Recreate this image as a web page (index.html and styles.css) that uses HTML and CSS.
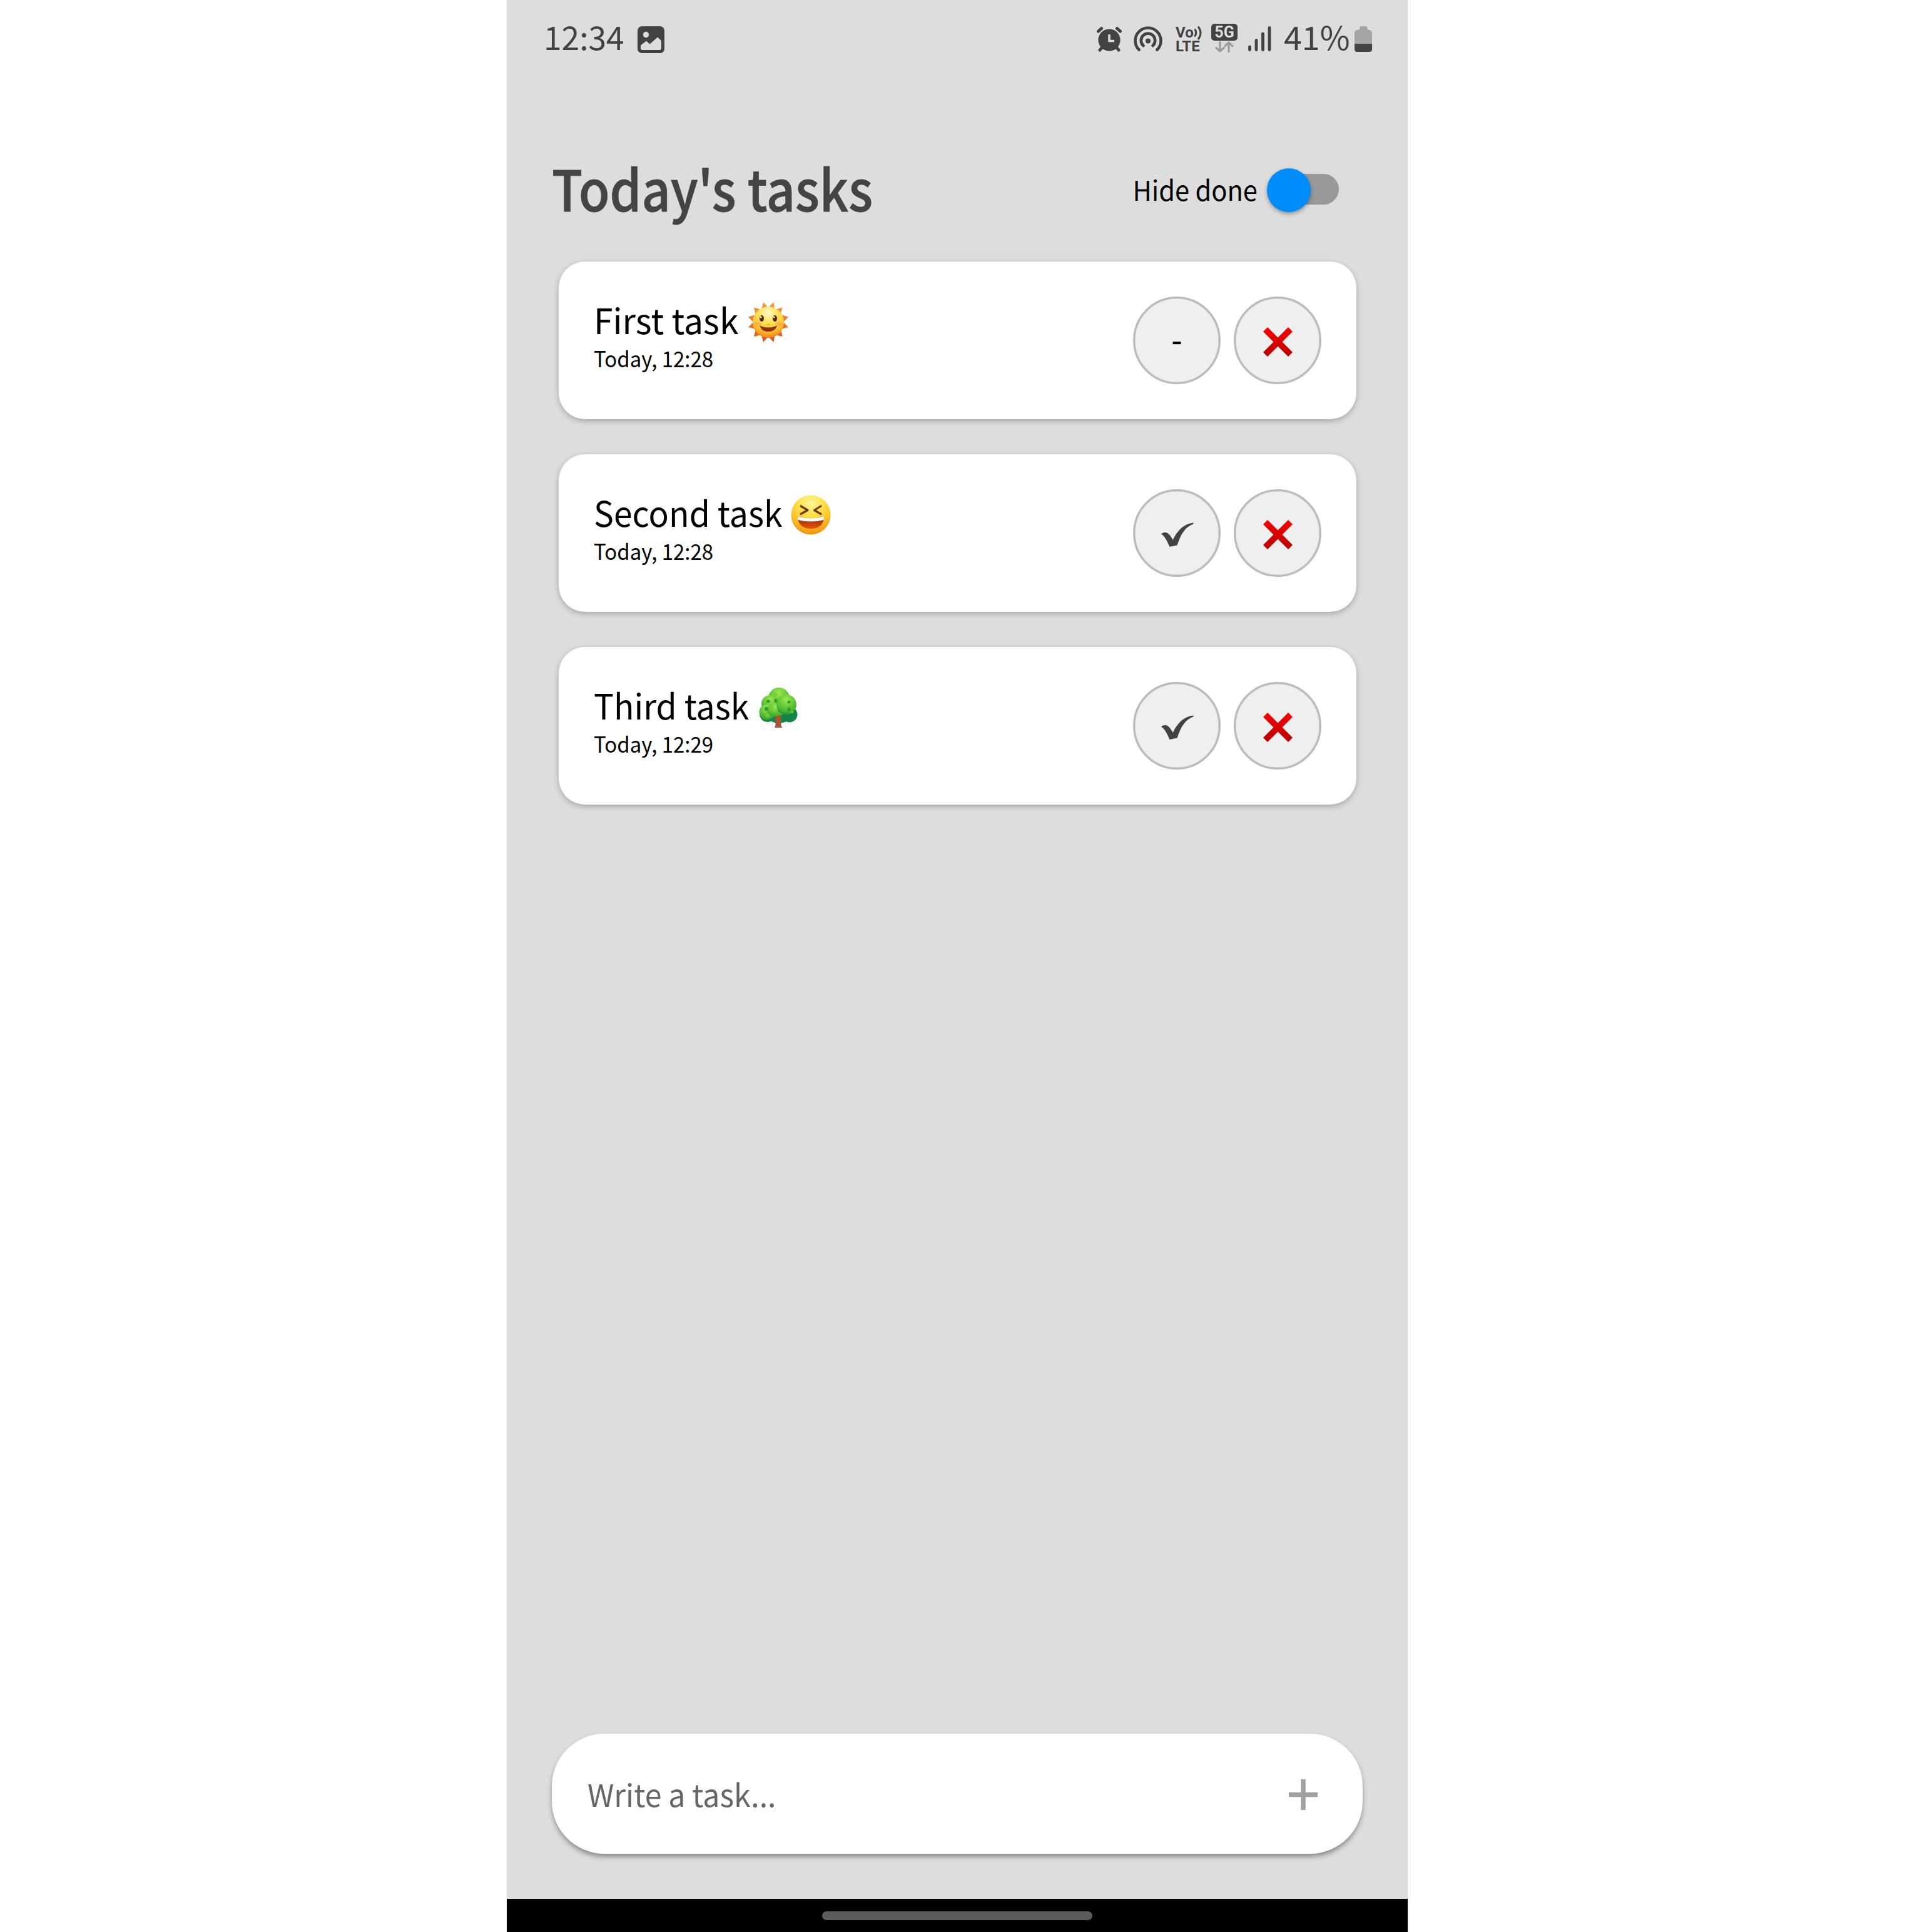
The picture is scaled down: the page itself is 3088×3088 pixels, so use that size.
FILE: index.html
```html
<!DOCTYPE html>
<html lang="en">
<head>
<meta charset="utf-8">
<title>Today's tasks</title>
<link rel="stylesheet" href="styles.css">
</head>
<body>
<svg class="defs" width="0" height="0" aria-hidden="true">
  <defs>
    <linearGradient id="red" x1="0" y1="0" x2="0" y2="1"><stop offset="0" stop-color="#f90000"/><stop offset="1" stop-color="#b80000"/></linearGradient>
    <radialGradient id="sunface" cx=".5" cy=".2" r=".85"><stop offset="0" stop-color="#fffbd0"/><stop offset=".3" stop-color="#ffe566"/><stop offset=".65" stop-color="#fdc832"/><stop offset="1" stop-color="#ee7418"/></radialGradient>
    <linearGradient id="ray" x1="0" y1="0" x2="0" y2="1"><stop offset="0" stop-color="#f59a3c"/><stop offset="1" stop-color="#d9531e"/></linearGradient>
    <radialGradient id="laugh" cx=".5" cy=".2" r=".85"><stop offset="0" stop-color="#fff69a"/><stop offset=".35" stop-color="#ffe34a"/><stop offset=".65" stop-color="#fdc42a"/><stop offset="1" stop-color="#f08206"/></radialGradient>
    <linearGradient id="mouth" x1="0" y1="0" x2="0" y2="1"><stop offset="0" stop-color="#8f2a08"/><stop offset="1" stop-color="#e85208"/></linearGradient>
    <radialGradient id="leaf" cx=".5" cy=".25" r=".8"><stop offset="0" stop-color="#9be84e"/><stop offset=".55" stop-color="#5cc436"/><stop offset="1" stop-color="#2f9f2f"/></radialGradient>
    <linearGradient id="trunk" x1="0" y1="0" x2="0" y2="1"><stop offset="0" stop-color="#a5571d"/><stop offset="1" stop-color="#a35349"/></linearGradient>
    <symbol id="cross" viewBox="0 0 47 47"><path d="M7 0 23.500 16.500 40 0 47 7 30.500 23.500 47 40 40 47 23.500 30.500 7 47 0 40 16.500 23.500 0 7Z" fill="url(#red)"/></symbol>
    <symbol id="check" viewBox="0 0 52 40"><path d="M0 18.500C3 16 6 15.500 9 16.500C14 19 17 25 18.700 28C26 12 37 2 51.500 .5V2.500C39 7 32 17 25.500 36.500L13.500 39C9.500 30 6 22 0 18.500Z" fill="#424242"/></symbol>
  </defs>
</svg>
<main class="phone">
  <header class="status">
    <span class="clock">12:34</span>
    <svg class="picture" viewBox="0 0 43 43"><rect width="43" height="43" rx="7" fill="#424242"/><circle cx="13.500" cy="13.500" r="4.700" fill="#ddd"/><path d="M5 30.500 14 23.500 19.500 28.500 32 17.500 38 23V35Q38 38 35 38H8Q5 38 5 35Z" fill="#ddd"/></svg>
    <div class="tray">
      <svg class="alarm" viewBox="0 0 40 40"><g stroke="#424242" stroke-width="5" stroke-linecap="round"><path d="M2.500 7 7.500 2.500M32.500 2.500 37.500 7M5 37 9 32M31 32 35 37"/></g><circle cx="20" cy="21" r="17.600" fill="#424242"/><path d="M20 12V22.500H28" fill="none" stroke="#ddd" stroke-width="3.600"/></svg>
      <svg class="hotspot" viewBox="0 0 46 40"><g fill="none" stroke="#424242" stroke-width="4.600" stroke-linecap="round"><path d="M8.500 37.500A20.500 20.500 0 1 1 37.500 37.500"/><path d="M15.500 31A11.200 11.200 0 1 1 30.500 31"/></g><circle cx="23" cy="23.500" r="4" fill="#424242"/></svg>
      <div class="volte"><span class="vo">Vo<svg viewBox="0 0 14 24"><g fill="none" stroke="#424242" stroke-width="3"><path d="M1.500 5.500Q6 11 1.500 17.500"/><path d="M7 1.500Q15 11.500 7 22"/></g></svg></span><span class="lte">LTE</span></div>
      <div class="net"><span class="five">5G</span><svg viewBox="0 0 30 18"><g fill="none" stroke="#9c9c9c" stroke-width="3.200" stroke-linecap="round"><path d="M8 1V15.500M2 10.500 8 16 14 10.500M22 16.500V2M16 7.500 22 2 28 7.500"/></g></svg></div>
      <svg class="signal" viewBox="0 0 37 40"><g stroke="#424242" stroke-width="4.800" stroke-linecap="round"><path d="M2.500 33V37.500M13 22.500V37.500M23.500 12V37.500M34 2.500V37.500"/></g></svg>
      <span class="percent">41%</span>
      <svg class="battery" viewBox="0 0 28 41"><path d="M8 3Q8 0 11 0H17.500Q20.500 0 20.500 3V5.500H23Q28 6.500 28 11V28H0V11Q0 6.500 5 5.500H8Z" fill="#a4a4a4"/><path d="M0 28H28V36.500Q28 41 23.500 41H4.500Q0 41 0 36.500Z" fill="#424242"/></svg>
    </div>
  </header>
  <section class="head">
    <h1>Today's tasks</h1>
    <label class="hide"><span class="label">Hide done</span><i class="switch"><i class="thumb"></i></i></label>
  </section>
  <ul class="tasks">
    <li class="card">
      <div class="info">
        <div class="name first"><span>First task</span>
          <svg class="emoji" viewBox="0 0 64 64" role="img" aria-label="sun with face"><path fill="url(#ray)" d="M24 0 32 9 40.500 0 42 12 54.500 8.500 51.500 20 64 23.500 56 32 64 40 52 43 54.500 55 42.500 52 40.500 64 32 55 24 64 21 52 9 55 12 43 0 40 8 32 0 23.500 12 20 9 8.500 21 12Z"/><circle cx="32" cy="32" r="25" fill="url(#sunface)"/><ellipse cx="15" cy="35" rx="6" ry="3.500" fill="#f79a55" opacity=".5"/><ellipse cx="49" cy="35" rx="6" ry="3.500" fill="#f79a55" opacity=".5"/><ellipse cx="21.500" cy="26" rx="3.500" ry="5" fill="#4a2605"/><ellipse cx="42.500" cy="26" rx="3.500" ry="5" fill="#4a2605"/><circle cx="20.200" cy="24" r="1.400" fill="#fff"/><circle cx="41.200" cy="24" r="1.400" fill="#fff"/><path d="M28.500 34Q32 36 36 34L32.500 37Z" fill="#ee9b22"/><path d="M18 37.500Q32 43.500 46 37.500Q43 47 32 47Q21 47 18 37.500Z" fill="#8d3208"/></svg></div>
        <div class="date">Today, 12:28</div>
      </div>
      <button class="round"><span class="dash">-</span></button>
      <button class="round"><svg class="x"><use href="#cross"/></svg></button>
    </li>
    <li class="card">
      <div class="info">
        <div class="name second"><span>Second task</span>
          <svg class="emoji" viewBox="0 0 64 64" role="img" aria-label="laughing face"><circle cx="32" cy="32" r="31.500" fill="url(#laugh)"/><path d="M16 18 27 24.500 16 30.500M48 18 37.500 24.500 48 30.500" fill="none" stroke="#70380c" stroke-width="3.200" stroke-linejoin="round" stroke-linecap="round"/><path d="M10.500 34.500Q32 40 53.500 34.500Q52 54 32 54Q12 54 10.500 34.500Z" fill="url(#mouth)"/><path d="M10.500 34.500Q32 40 53.500 34.500L52.500 40Q32 45 11.500 40Z" fill="#fff"/></svg></div>
        <div class="date">Today, 12:28</div>
      </div>
      <button class="round"><svg class="ok"><use href="#check"/></svg></button>
      <button class="round"><svg class="x"><use href="#cross"/></svg></button>
    </li>
    <li class="card">
      <div class="info">
        <div class="name third"><span>Third task</span>
          <svg class="emoji" viewBox="0 0 64 64" role="img" aria-label="tree"><g fill="#14854a"><circle cx="15" cy="42" r="13"/><circle cx="50" cy="43" r="12.500"/><ellipse cx="33" cy="48" rx="16" ry="9"/></g><g fill="url(#leaf)"><circle cx="33" cy="17" r="17"/><circle cx="19" cy="26" r="14"/><circle cx="14" cy="39" r="12.500"/><ellipse cx="28" cy="36" rx="14" ry="11"/><circle cx="45" cy="27" r="16"/></g><path d="M31 36Q38 43 48 41" fill="none" stroke="#238b2c" stroke-width="1.500"/><path d="M27 45Q31 47 36 44L36.500 61 38.500 64H26L27.500 60Z" fill="url(#trunk)"/><g fill="#2f9e2b"><ellipse cx="16" cy="22" rx="2.800" ry="2.500"/><ellipse cx="28" cy="21" rx="2.300" ry="3"/><ellipse cx="13" cy="34" rx="3" ry="3.200"/><ellipse cx="49" cy="23" rx="2.500" ry="2.500"/><ellipse cx="49" cy="35" rx="2.600" ry="3.200"/></g><g fill="#79cf27"><circle cx="28" cy="11" r="2.500"/><circle cx="22" cy="31" r="2.500"/><circle cx="15" cy="45" r="2.600"/><circle cx="54" cy="39" r="2"/></g></svg></div>
        <div class="date">Today, 12:29</div>
      </div>
      <button class="round"><svg class="ok"><use href="#check"/></svg></button>
      <button class="round"><svg class="x"><use href="#cross"/></svg></button>
    </li>
  </ul>
  <form class="composer">
    <span class="hint">Write a task...</span>
    <svg class="plus" viewBox="0 0 46 49"><path d="M0 24.500H46M23 0V49" stroke="#a1a1a1" stroke-width="7.500"/></svg>
  </form>
  <footer class="nav"><i class="pill"></i></footer>
</main>
</body>
</html>
```
FILE: styles.css
```css
* { box-sizing: border-box; }
body {
  margin: 0;
  background: #fff;
  font-family: "Noto Sans CJK SC", "Noto Sans", sans-serif;
}
.defs { position: absolute; }
svg { display: block; flex: none; }

.phone {
  display: flex;
  flex-direction: column;
  width: 1440px;
  height: 3088px;
  margin-left: 810px;
  background: #ddd;
}

/* slightly condensed lettering */
h1, .clock, .label, .name span, .date, .hint {
  white-space: nowrap;
  transform-origin: left center;
}

.status {
  display: flex;
  align-items: flex-start;
  height: 130px;
  padding: 0 57px 0 59px;
  color: #424242;
}
.clock, .percent { font-size: 52px; line-height: 116.600px; }
.clock { width: 150px; transform: scaleX(.99); }
.picture { width: 43px; height: 43px; margin-top: 42px; }
.tray { display: flex; align-items: flex-start; margin-left: auto; }
.alarm { width: 40px; height: 40px; margin: 43px 19px 0 0; }
.hotspot { width: 46px; height: 40px; margin: 42px 21px 0 0; }
.volte {
  width: 42px;
  margin: 41px 15px 0 0;
  font: 700 24px/22px Roboto, sans-serif;
}
.vo, .lte { display: flex; height: 22px; }
.vo svg { width: 14px; height: 24px; }
.net { display: flex; flex-direction: column; align-items: center; width: 42px; margin: 38px 17px 0 0; }
.five {
  width: 42px;
  height: 27px;
  border-radius: 5px;
  background: #424242;
  color: #ddd;
  font: 700 25px/28px Roboto, sans-serif;
  text-align: center;
}
.net svg { width: 30px; height: 18px; margin-top: 1px; }
.signal { width: 37px; height: 40px; margin: 42px 20px 0 0; }
.percent { width: 113px; }
.battery { width: 28px; height: 41px; margin-top: 42px; }

.head {
  display: flex;
  justify-content: space-between;
  align-items: flex-start;
  height: 288px;
  padding: 108px 107px 0 72px;
}
h1 {
  margin: 0;
  color: #444;
  font-size: 90px;
  font-weight: 500;
  line-height: 122px;
  transform: scaleX(.896);
  -webkit-text-stroke: .8px #444;
}
.hide { display: flex; color: #000; font-size: 44px; line-height: 129px; }
.label { transform: scaleX(.945); transform-origin: right center; }
.switch {
  position: relative;
  width: 114px;
  height: 49px;
  margin: 40px 3px 0 16px;
  border-radius: 25px;
  background: #999;
}
.thumb {
  position: absolute;
  left: -1px;
  top: -9px;
  width: 70px;
  height: 70px;
  border-radius: 50%;
  background: #008cfa;
  box-shadow: 0 3px 6px rgba(0, 0, 0, .35);
}

.tasks {
  display: flex;
  flex-direction: column;
  gap: 56px;
  margin: 0;
  padding: 0 82px 0 83px;
  list-style: none;
}
.card {
  display: flex;
  align-items: center;
  gap: 21px;
  height: 252px;
  padding: 0 56px;
  border-radius: 42px;
  background: #fff;
  box-shadow: 0 3px 10px rgba(0, 0, 0, .26);
}
.info { flex: 1; align-self: stretch; padding-top: 52px; color: #000; }
.name { display: flex; font-size: 56px; line-height: 79px; }
.name span { transform: scaleX(.956); }
.name.first span { transform: scaleX(.985); }
.emoji { width: 64px; height: 64px; margin-top: 13px; }
.first .emoji { margin-left: 12px; }
.third .emoji { margin-left: 3px; }
.date { font-size: 35px; line-height: 46px; transform: scaleX(.942); }
.round {
  display: grid;
  place-items: center;
  flex: none;
  width: 140px;
  height: 140px;
  padding: 0;
  border: 3px solid #bababa;
  border-radius: 50%;
  background: #efefef;
  color: #000;
  font: 500 49px/60px "Noto Sans CJK SC", sans-serif;
  box-shadow: inset 0 0 0 .5px #bababa;
}
.dash { margin-bottom: 6px; }
.x { width: 47px; height: 47px; margin-top: 4px; }
.ok { width: 52px; height: 40px; margin: 5px 0 0 1px; }

.composer {
  display: flex;
  align-items: center;
  justify-content: space-between;
  width: 1296px;
  height: 192px;
  margin: auto auto 72px;
  padding: 0 72px 0 57px;
  border-radius: 84px;
  background: #fff;
  box-shadow: 0 5px 8px -1px rgba(0, 0, 0, .42);
}
.hint { color: #666; font-size: 49px; line-height: 80px; transform: scaleX(.984); }
.plus { width: 46px; height: 49px; margin-top: 3px; }

.nav { display: flex; justify-content: center; height: 53px; padding-top: 20px; background: #000; }
.pill { width: 432px; height: 14px; border-radius: 7px; background: #5c5c5c; }
```
